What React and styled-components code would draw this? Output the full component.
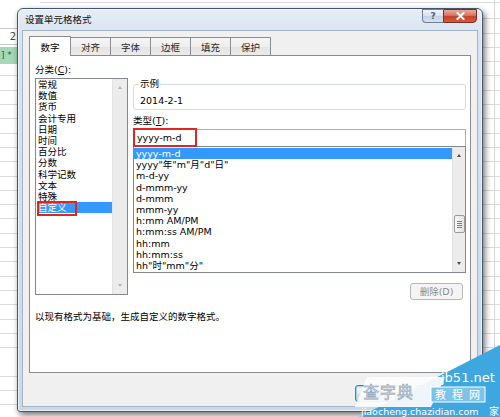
import styled, { createGlobalStyle } from 'styled-components'

const GlobalStyle = createGlobalStyle`
  html, body {
    margin: 0;
    padding: 0;
  }
  body {
    width: 500px;
    height: 417px;
    overflow: hidden;
    background: #fff;
    font-family: "DejaVu Sans", "Noto Sans CJK SC", sans-serif;
    color: #000;
  }
`

const categories = ['常规', '数值', '货币', '会计专用', '日期', '时间', '百分比', '分数', '科学记数', '文本', '特殊', '自定义']
const formats = [
  'yyyy-m-d',
  'yyyy"年"m"月"d"日"',
  'm-d-yy',
  'd-mmm-yy',
  'd-mmm',
  'mmm-yy',
  'h:mm AM/PM',
  'h:mm:ss AM/PM',
  'hh:mm',
  'hh:mm:ss',
  'hh"时"mm"分"',
]
const tabs = ['数字', '对齐', '字体', '边框', '填充', '保护']

const Sheet = styled.div`
  position: relative;
  display: flex;
  width: 500px;
  height: 417px;
  overflow: hidden;
  background-color: #fff;
  background-image: repeating-linear-gradient(
    to bottom,
    transparent 0 13.3px,
    #dadada 13.3px 14.3px
  );
  background-position: 0 5px;
`

const LeftCells = styled.div`
  width: 40px;
  display: flex;
  flex-direction: column;
`

const TopBlank = styled.div`
  height: 28px;
  background: #fff;
`

const FormulaCell = styled.div`
  box-sizing: border-box;
  height: 17px;
  width: 30px;
  margin-left: -12px;
  padding-right: 1px;
  border: 1px solid #c9c9c9;
  background: #fff;
  font-size: 10px;
  line-height: 15px;
  text-align: right;
  color: #444;
`

const CellGap = styled.div`
  height: 2px;
  background: #fff;
`

const GreenCell = styled.div`
  height: 17px;
  padding-left: 1px;
  background: #a6d7b6;
  font-size: 9px;
  line-height: 17px;
  color: #2f5f48;
`

const SheetSpace = styled.div`
  flex: 1;
`

const GridColumn = styled.div`
  width: 1px;
  margin-right: 5px;
  background: #d6d6d6;
`

const Dialog = styled.div`
  position: absolute;
  left: 17px;
  top: 8px;
  width: 466px;
  height: 404px;
  box-sizing: border-box;
  display: flex;
  flex-direction: column;
  padding: 0 4px 4px;
  border: 1px solid #46576c;
  border-radius: 6px 6px 3px 3px;
  background: linear-gradient(to bottom, #e6edf5 0%, #d7e3f0 7%, #c9d9ea 100%);
  box-shadow: 2px 3px 6px rgba(0, 0, 0, 0.55), inset 0 0 0 1px rgba(255, 255, 255, 0.6);
`

const TitleBar = styled.div`
  display: flex;
  height: 21px;
  flex-shrink: 0;
`

const Title = styled.div`
  flex: 1;
  padding-left: 3px;
  line-height: 22px;
  font-size: 9.5px;
  color: #111;
`

const TitleButtons = styled.div`
  display: flex;
  align-items: flex-start;
  margin-right: 1px;
`

const HelpButton = styled.div`
  box-sizing: border-box;
  width: 21px;
  height: 14px;
  border: 1px solid #6e8099;
  border-right: none;
  border-radius: 0 0 0 4px;
  background: linear-gradient(to bottom, #eef3f8 0%, #d8e2ee 48%, #c3d2e4 52%, #d5e1ee 100%);
  font-size: 9px;
  font-weight: bold;
  line-height: 12px;
  text-align: center;
  color: #4f6079;
`

const CloseButton = styled.div`
  box-sizing: border-box;
  width: 34px;
  height: 14px;
  display: flex;
  align-items: center;
  justify-content: center;
  border: 1px solid #7a2d22;
  border-radius: 0 0 4px 0;
  background: linear-gradient(to bottom, #eaa898 0%, #d97660 45%, #c5412c 52%, #d45a3e 100%);
`

const Client = styled.div`
  flex: 1;
  display: flex;
  flex-direction: column;
  padding: 5px 6px 0;
  background: #f0f0f0;
  border: 1px solid #a3b5ca;
`

const TabRow = styled.div`
  display: flex;
  align-items: flex-end;
  height: 19px;
  flex-shrink: 0;
`

const Tab = styled.div`
  position: relative;
  z-index: ${(p) => (p.$active ? 1 : 0)};
  box-sizing: border-box;
  width: ${(p) => (p.$active ? 42 : 41)}px;
  height: ${(p) => (p.$active ? 20 : 18)}px;
  margin-left: ${(p) => (p.$first ? 0 : -1)}px;
  margin-bottom: ${(p) => (p.$active ? -1 : 0)}px;
  display: flex;
  align-items: center;
  justify-content: center;
  border: 1px solid #898c95;
  border-bottom: none;
  background: ${(p) =>
    p.$active ? '#fff' : 'linear-gradient(to bottom, #f6f6f6 0%, #eeeeee 50%, #e4e4e4 52%, #ebebeb 100%)'};
  font-size: 9.5px;
  color: ${(p) => (p.$active ? '#000' : '#2a2a2a')};
`

const Panel = styled.div`
  box-sizing: border-box;
  height: 318px;
  flex-shrink: 0;
  display: flex;
  flex-direction: column;
  padding: 8px 4px 0 5px;
  border: 1px solid #898c95;
  background: #fff;
`

const PanelBody = styled.div`
  display: grid;
  grid-template-columns: 93px 1fr;
  column-gap: 5px;
  align-items: start;
`

const Column = styled.div`
  display: flex;
  flex-direction: column;
  padding-top: ${(p) => p.$top || 0}px;
`

const Label = styled.div`
  height: 12px;
  margin-top: ${(p) => p.$mt || 0}px;
  margin-bottom: 2px;
  font-size: 9.5px;
  line-height: 12px;
`

const ListBox = styled.div`
  box-sizing: border-box;
  height: ${(p) => p.$height}px;
  display: flex;
  border: 1px solid #828790;
  background: #fff;
`

const Items = styled.div`
  flex: 1;
  min-width: 0;
  padding-top: ${(p) => p.$pad}px;
`

const Item = styled.div`
  position: relative;
  height: 11.2px;
  margin-left: ${(p) => p.$indent}px;
  padding-left: ${(p) => p.$pad}px;
  font-size: 9.5px;
  line-height: 11.2px;
  white-space: nowrap;
  background: ${(p) => (p.$selected ? '#3399ff' : 'transparent')};
  color: ${(p) => (p.$selected ? '#fff' : '#000')};
`

const Scrollbar = styled.div`
  width: ${(p) => p.$width}px;
  display: flex;
  flex-direction: column;
  background: #ececec;
  border-left: 1px solid #e2e2e2;
`

const ArrowButton = styled.div`
  height: 17px;
  display: flex;
  align-items: center;
  justify-content: center;
`

const Arrow = styled.span`
  width: 0;
  height: 0;
  border-left: 2.5px solid transparent;
  border-right: 2.5px solid transparent;
  border-${(p) => (p.$down ? 'top' : 'bottom')}: 3px solid ${(p) => (p.$disabled ? '#b5b5b5' : '#4e4e4e')};
`

const Track = styled.div`
  flex: 1;
  display: flex;
  flex-direction: column;
  align-items: center;
`

const Thumb = styled.div`
  box-sizing: border-box;
  width: 11px;
  height: 18px;
  display: flex;
  flex-direction: column;
  align-items: center;
  justify-content: center;
  gap: 1px;
  border: 1px solid #9b9b9b;
  border-radius: 2px;
  background: linear-gradient(to right, #f7f7f7, #e2e2e2);
`

const Grip = styled.span`
  width: 5px;
  height: 1px;
  background: #7d7d7d;
`

const Marker = styled.span`
  position: absolute;
  box-sizing: border-box;
  left: ${(p) => p.$x}px;
  top: ${(p) => p.$y}px;
  width: ${(p) => p.$w}px;
  height: ${(p) => p.$h}px;
  border: 2px solid #e2261d;
  pointer-events: none;
`

const SampleBox = styled.fieldset`
  margin: 0;
  padding: 5px 5px 2px;
  border: 1px solid #d3dde5;
  border-radius: 3px;
  min-width: 0;
`

const SampleLegend = styled.legend`
  padding: 0 1px;
  font-size: 9.5px;
  line-height: 12px;
`

const SampleValue = styled.div`
  height: 12px;
  padding-left: 1px;
  font-size: 9.5px;
  line-height: 12px;
`

const InputWrap = styled.div`
  position: relative;
`

const TypeInput = styled.div`
  box-sizing: border-box;
  height: 17px;
  padding-left: 3px;
  border: 1px solid #abadb3;
  border-bottom: none;
  font-size: 9.5px;
  line-height: 16px;
  background: #fff;
`

const ButtonRow = styled.div`
  display: flex;
  justify-content: flex-end;
  margin-top: 10px;
  padding-right: 3px;
`

const DisabledButton = styled.div`
  box-sizing: border-box;
  width: 53px;
  height: 17px;
  border: 1px solid #b3b7ba;
  border-radius: 3px;
  background: #f4f4f4;
  font-size: 9.5px;
  line-height: 15px;
  text-align: center;
  color: #8c8c8c;
`

const Description = styled.div`
  margin-top: 11px;
  font-size: 9.5px;
  line-height: 12px;
`

const Footer = styled.div`
  display: flex;
  justify-content: flex-end;
  gap: 4px;
  padding-top: 12px;
`

const DialogButton = styled.div`
  box-sizing: border-box;
  width: 56px;
  height: 17px;
  border: 1px solid ${(p) => (p.$default ? '#3c7fb1' : '#707070')};
  border-radius: 3px;
  background: linear-gradient(to bottom, #f2f2f2 0%, #ebebeb 50%, #dddddd 52%, #cfcfcf 100%);
  box-shadow: ${(p) => (p.$default ? 'inset 0 0 0 1px #9fd5f3' : 'none')};
  font-size: 9.5px;
  line-height: 15px;
  text-align: center;
`

const Watermark = styled.svg`
  position: absolute;
  right: 0;
  bottom: 0;
  z-index: 5;
  font-family: "DejaVu Sans", "Noto Sans CJK SC", sans-serif;
`

function ScrollColumn({ width, disabled, thumbOffset }) {
  return (
    <Scrollbar $width={width}>
      <ArrowButton>
        <Arrow $disabled={disabled} />
      </ArrowButton>
      <Track>
        {!disabled && (
          <Thumb style={{ marginTop: thumbOffset }}>
            <Grip />
            <Grip />
            <Grip />
            <Grip />
          </Thumb>
        )}
      </Track>
      <ArrowButton>
        <Arrow $down $disabled={disabled} />
      </ArrowButton>
    </Scrollbar>
  )
}

export default function App() {
  return (
    <>
      <GlobalStyle />
      <Sheet>
        <LeftCells>
          <TopBlank />
          <FormulaCell>2</FormulaCell>
          <CellGap />
          <GreenCell>] *</GreenCell>
        </LeftCells>
        <SheetSpace />
        <GridColumn />

        <Dialog>
          <TitleBar>
            <Title>设置单元格格式</Title>
            <TitleButtons>
              <HelpButton>?</HelpButton>
              <CloseButton>
                <svg width="9" height="8" viewBox="0 0 9 8">
                  <path d="M1.5 1 L7.5 7 M7.5 1 L1.5 7" stroke="#fff" strokeWidth="2" strokeLinecap="square" />
                </svg>
              </CloseButton>
            </TitleButtons>
          </TitleBar>

          <Client>
            <TabRow>
              {tabs.map((t, i) => (
                <Tab key={t} $first={i === 0} $active={i === 0}>
                  {t}
                </Tab>
              ))}
            </TabRow>

            <Panel>
              <PanelBody>
                <Column>
                  <Label>分类(<u>C</u>):</Label>
                  <ListBox $height={217}>
                    <Items $pad={0}>
                      {categories.map((c, i) => {
                        const selected = i === categories.length - 1
                        return (
                          <Item key={c} $indent={1} $pad={1} $selected={selected}>
                            {c}
                            {selected && <Marker $x={0} $y={-1} $w={40} $h={15} />}
                          </Item>
                        )
                      })}
                    </Items>
                    <ScrollColumn width={14} disabled />
                  </ListBox>
                </Column>

                <Column $top={14}>
                  <SampleBox>
                    <SampleLegend>示例</SampleLegend>
                    <SampleValue>2014-2-1</SampleValue>
                  </SampleBox>
                  <Label $mt={5}>类型(<u>T</u>):</Label>
                  <InputWrap>
                    <TypeInput>yyyy-m-d</TypeInput>
                    <Marker $x={0} $y={-1} $w={64} $h={19} />
                  </InputWrap>
                  <ListBox $height={127}>
                    <Items $pad={1}>
                      {formats.map((f, i) => (
                        <Item key={f} $indent={0} $pad={2} $selected={i === 0}>
                          {f}
                        </Item>
                      ))}
                    </Items>
                    <ScrollColumn width={12} thumbOffset={51} />
                  </ListBox>
                  <ButtonRow>
                    <DisabledButton>删除(D)</DisabledButton>
                  </ButtonRow>
                </Column>
              </PanelBody>
              <Description>以现有格式为基础，生成自定义的数字格式。</Description>
            </Panel>

            <Footer>
              <DialogButton $default>确定</DialogButton>
              <DialogButton>取消</DialogButton>
            </Footer>
          </Client>
        </Dialog>

        <Watermark width="145" height="80" viewBox="0 0 145 80">
          <polygon points="4,80 145,8 145,80" fill="#3fa7df" />
          <polygon points="12,40 90,40 76,70 0,70" fill="#fdfdfd" opacity="0.92" />
          <text x="8" y="61" fontSize="16" fill="#e9eef2" stroke="#8aa0b4" strokeWidth="0.6" letterSpacing="1">查字典</text>
          <text x="86" y="45" fontSize="13" fill="#fff">jb51.net</text>
          <rect x="76" y="50" width="54" height="15" fill="#7cc3ea" stroke="#fff" strokeWidth="1" />
          <text x="80" y="62" fontSize="11" fill="#fff" letterSpacing="6">教程网</text>
          <text x="134" y="78" fontSize="10" fill="#fff">家</text>
          <text x="6" y="78" fontSize="9.5" fill="#fff">jiaocheng.chazidian.com</text>
        </Watermark>
      </Sheet>
    </>
  )
}
